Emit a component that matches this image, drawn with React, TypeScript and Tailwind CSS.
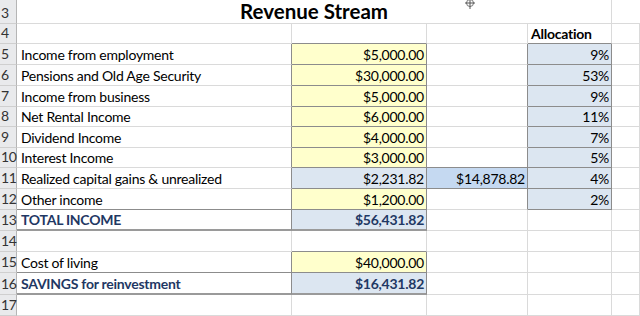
import React from "react";

type Cell = {
  t?: string;
  bg?: string;
  bold?: boolean;
  navy?: boolean;
  right?: boolean;
  bd?: boolean;
  thick?: boolean;
};

const WC = [
  "w-[275px] pl-[4px]",
  "w-[135px] pl-[3px] pr-[2px]",
  "w-[101px] pl-[3px] pr-[2px]",
  "w-[84px] pl-[3px] pr-[2px]",
  "w-[28px]",
];
const YEL = "bg-[#ffffcc]";
const BLU = "bg-[#dce6f1]";
const BLU2 = "bg-[#c5d9f1]";
const H20 = "h-[20px]";
const H21 = "h-[21px]";
const H22 = "h-[22px]";

const labels: [string, string, string, string][] = [
  ["Income from employment", "$5,000.00", "", "9%"],
  ["Pensions and Old Age Security", "$30,000.00", "", "53%"],
  ["Income from business", "$5,000.00", "", "9%"],
  ["Net Rental Income", "$6,000.00", "", "11%"],
  ["Dividend Income", "$4,000.00", "", "7%"],
  ["Interest Income", "$3,000.00", "", "5%"],
  ["Realized capital gains & unrealized", "$2,231.82", "$14,878.82", "4%"],
  ["Other income", "$1,200.00", "", "2%"],
];

type Row = { n: string; h: string; cells: Cell[] };

const rows: Row[] = [];
rows.push({ n: "4", h: H20, cells: [{}, {}, {}, { t: "Allocation", bold: true }, {}] });
const hs = [H21, H21, H21, H20, H21, H20, H21, H21];
labels.forEach((l, i) => {
  const isCap = i === 6;
  rows.push({
    n: String(5 + i),
    h: hs[i],
    cells: [
      { t: l[0] },
      { t: l[1], bg: isCap ? BLU : YEL, right: true, bd: true },
      isCap ? { t: l[2], bg: BLU2, right: true, bd: true } : {},
      { t: l[3], bg: BLU, right: true, bd: true },
      {},
    ],
  });
});
rows.push({
  n: "13",
  h: H21,
  cells: [
    { t: "TOTAL INCOME", bold: true, navy: true, bd: true, thick: true },
    { t: "$56,431.82", bg: BLU, bold: true, navy: true, right: true, bd: true, thick: true },
    {},
    {},
    {},
  ],
});
rows.push({ n: "14", h: H21, cells: [{}, {}, {}, {}, {}] });
rows.push({
  n: "15",
  h: H21,
  cells: [{ t: "Cost of living" }, { t: "$40,000.00", bg: YEL, right: true, bd: true }, {}, {}, {}],
});
rows.push({
  n: "16",
  h: H22,
  cells: [
    { t: "SAVINGS for reinvestment", bold: true, navy: true, bd: true, thick: true },
    { t: "$16,431.82", bg: BLU, bold: true, navy: true, right: true, bd: true, thick: true },
    {},
    {},
    {},
  ],
});
rows.push({ n: "17", h: H21, cells: [{}, {}, {}, {}, {}] });

function Hdr({ n, h }: { n: string; h: string }) {
  return (
    <div
      className={`w-[17px] ${h} shrink-0 box-border border-r border-b border-r-[#b5b5b5] border-b-[#cfcfcf] bg-[#e9eaec] text-[#333] text-[14px] leading-none flex items-end pb-[3px] pl-[1px]`}
    >
      {n}
    </div>
  );
}

export default function App() {
  return (
    <div className="relative w-[640px] h-[316px] overflow-hidden bg-white text-black font-['Lato',sans-serif] tracking-[-0.25px]">
      <div className="flex">
        <Hdr n="3" h="h-[24px]" />
        <div className="w-[595px] h-[24px] shrink-0 box-border border-r border-b border-[#dadada] flex items-center justify-center text-[20.5px] font-bold leading-none tracking-normal">
          Revenue Stream
        </div>
        <div className="w-[28px] h-[24px] shrink-0 box-border border-b border-[#dadada]" />
      </div>
      {rows.map((row, r) => (
        <div key={row.n} className="flex">
          <Hdr n={row.n} h={row.h} />
          {row.cells.map((c, ci) => {
            const next = row.cells[ci + 1];
            const below = rows[r + 1]?.cells[ci];
            const darkR = !!(c.bd && ci > 0) || !!next?.bd;
            const darkB = !!c.bd || !!below?.bd;
            const rc = darkR ? "border-r-[#8c8c8c]" : "border-r-[#dadada]";
            const bc = c.thick
              ? "border-b-2 border-b-[#9a9a9a]"
              : darkB
              ? "border-b border-b-[#8c8c8c]"
              : "border-b border-b-[#dadada]";
            return (
              <div
                key={ci}
                className={`${WC[ci]} ${row.h} shrink-0 box-border border-r ${rc} ${bc} ${c.bg ?? ""} flex items-end pb-[2px] text-[14px] leading-none whitespace-nowrap ${
                  c.right ? "justify-end" : "justify-start"
                } ${c.bold ? "font-bold" : ""} ${c.navy ? "text-[#1f3864]" : ""}`}
              >
                {c.t}
              </div>
            );
          })}
        </div>
      ))}
      <svg className="absolute left-[463px] top-[-4px]" width="14" height="14" viewBox="0 0 14 14">
        <circle cx="7" cy="7" r="3.5" fill="none" stroke="#777" strokeWidth="1" />
        <line x1="7" y1="1" x2="7" y2="13" stroke="#555" strokeWidth="1" />
        <line x1="2" y1="7" x2="12" y2="7" stroke="#555" strokeWidth="1" />
      </svg>
    </div>
  );
}
